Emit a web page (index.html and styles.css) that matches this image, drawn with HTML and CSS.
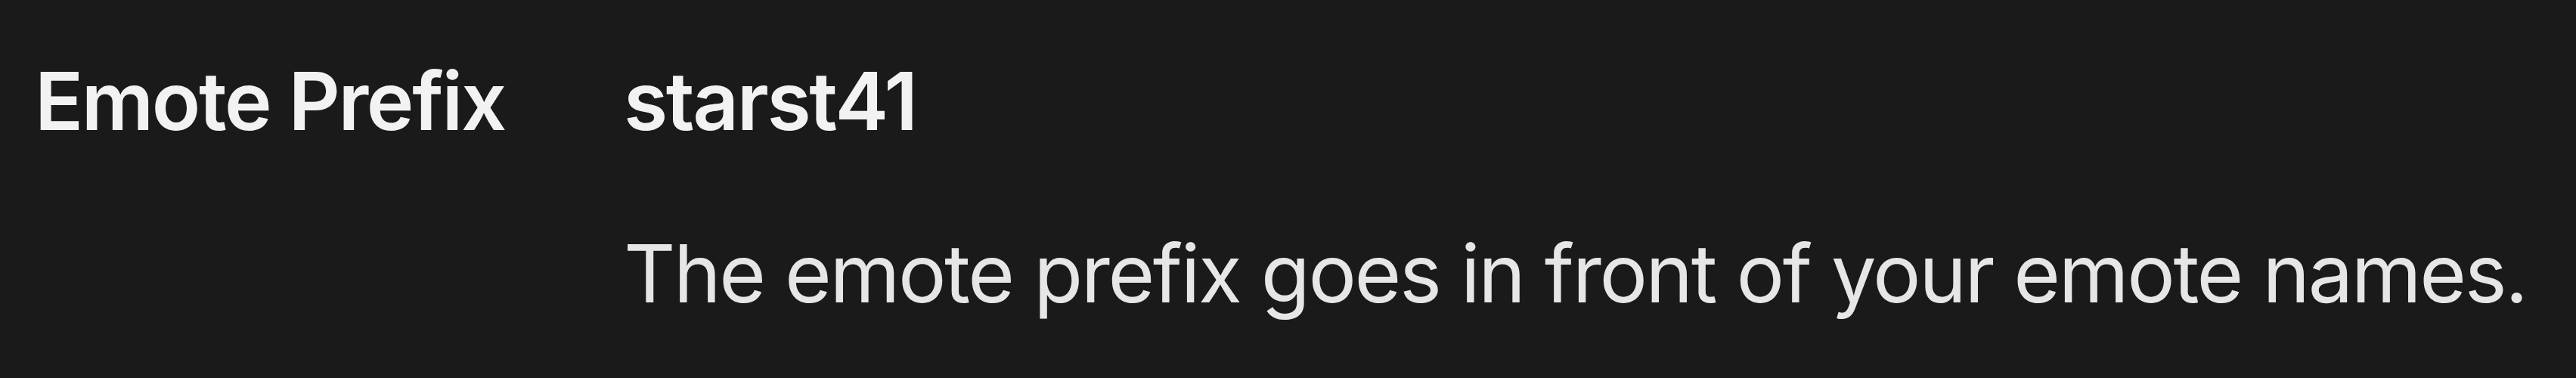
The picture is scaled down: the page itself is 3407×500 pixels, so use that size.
FILE: index.html
```html
<!DOCTYPE html>
<html lang="en">
<head>
<meta charset="UTF-8">
<title>Emote Prefix</title>
<link rel="stylesheet" href="styles.css">
</head>
<body>
<div class="setting">
  <div class="setting-label">Emote Prefix</div>
  <div class="setting-body">
    <div class="setting-value">starst41</div>
    <p class="setting-help">The emote prefix goes in front of your emote names.</p>
  </div>
</div>
</body>
</html>
```

FILE: styles.css
```css
body { margin: 0; background: #1a1a1a; font-family: Inter, "Noto Sans", sans-serif; color: #f2f2f2; }
.setting { display: grid; grid-template-columns: 779px 1fr; padding: 70px 0 0 46px; letter-spacing: -2.4px; white-space: nowrap; }
.setting-label { font-size: 106px; font-weight: 600; line-height: 128px; }
.setting-value { font-size: 106px; font-weight: 600; line-height: 128px; }
.setting-help { margin: 100px 0 0; font-size: 106px; font-weight: 400; line-height: 128px; color: #e6e6e6; }
```
